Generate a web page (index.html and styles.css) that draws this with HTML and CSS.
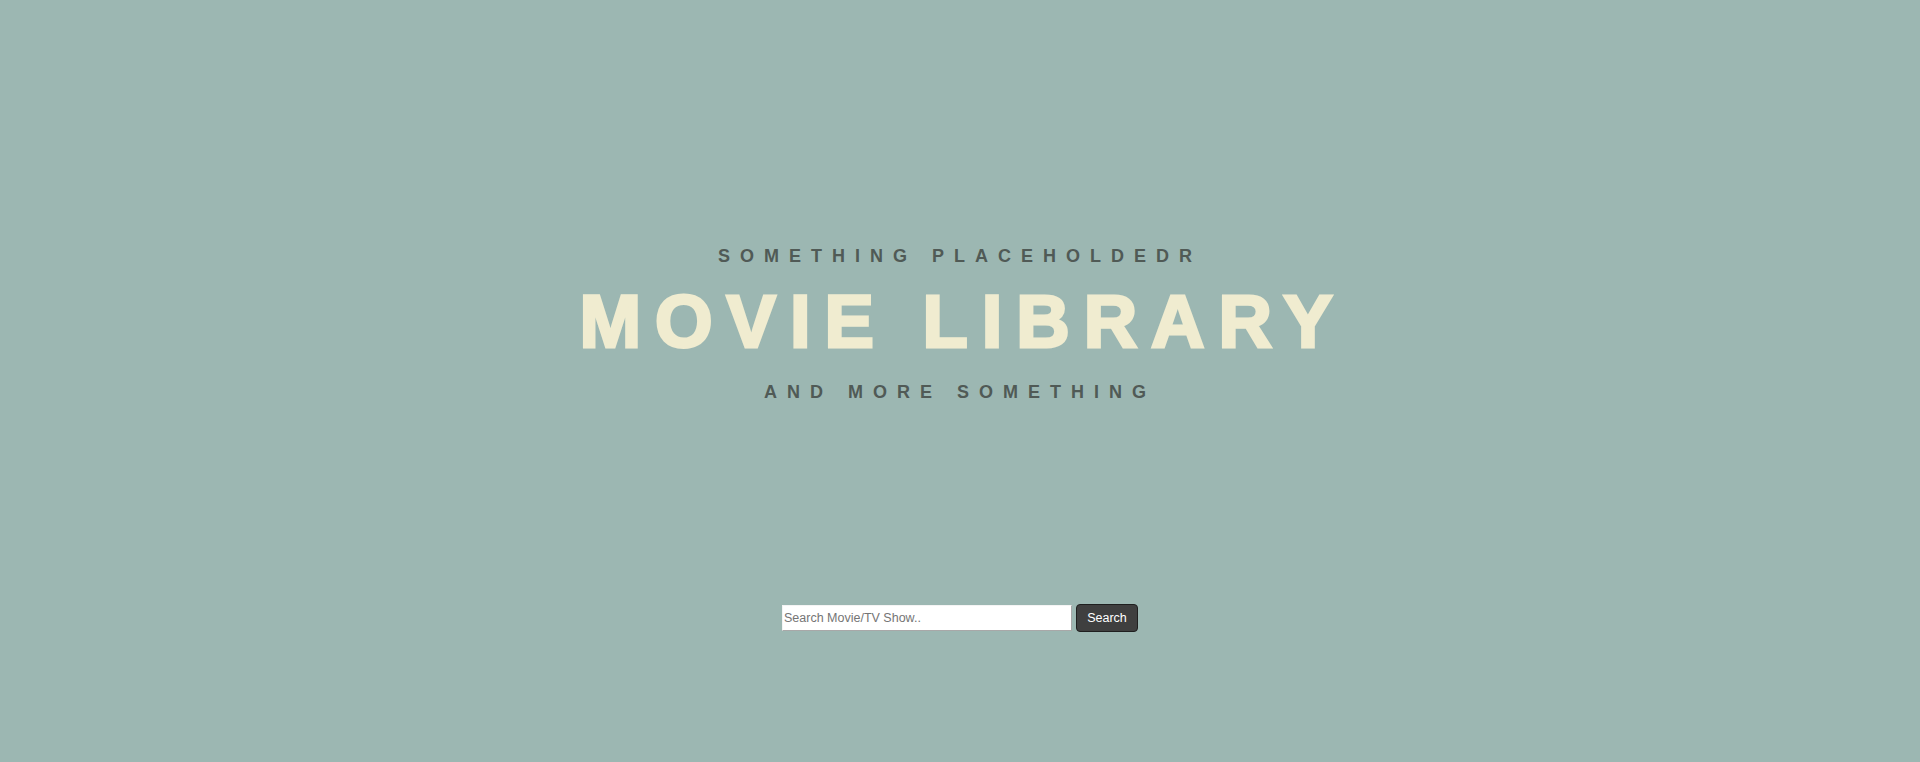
FILE: index.html
```html
<!DOCTYPE html>
<html lang="en">
<head>
<meta charset="utf-8">
<title>Movie Library</title>
<link rel="stylesheet" href="styles.css">
</head>
<body>
<header class="hero">
  <p class="kicker">SOMETHING PLACEHOLDEDR</p>
  <h1 class="title">MOVIE LIBRARY</h1>
  <p class="kicker kicker-bottom">AND MORE SOMETHING</p>
</header>
<form class="search" onsubmit="return false;">
  <input class="search-input" type="text" placeholder="Search Movie/TV Show..">
  <button class="search-btn" type="submit">Search</button>
</form>
</body>
</html>
```
FILE: styles.css
```css
html, body {
  margin: 0;
  padding: 0;
}
body {
  background: #9cb7b2;
  font-family: "Liberation Sans", Arial, sans-serif;
  min-height: 762px;
}
.hero {
  display: flex;
  flex-direction: column;
  align-items: center;
  padding-top: 246px;
}
.kicker {
  margin: 0;
  font-size: 18px;
  line-height: 20px;
  font-weight: 700;
  letter-spacing: 10px;
  color: #505a56;
  text-align: center;
}
.title {
  margin: 16px 0 0;
  padding-left: 6px;
  font-size: 74px;
  line-height: 80px;
  font-weight: 700;
  letter-spacing: 14px;
  color: #f0ecd0;
  -webkit-text-stroke: 3px #f0ecd0;
  text-align: center;
}
.kicker-bottom {
  margin-top: 20px;
}
.search {
  display: flex;
  justify-content: center;
  align-items: center;
  gap: 4px;
  margin: 202px 0 0;
}
.search-input {
  box-sizing: border-box;
  width: 290px;
  height: 26px;
  margin: 0;
  padding: 0 1px;
  border: 1px solid;
  border-color: #f4f4f4 #a8a8a8 #a8a8a8 #f4f4f4;
  background: #fff;
  font-family: "Liberation Sans", Arial, sans-serif;
  font-size: 12.5px;
  color: #333;
  outline: none;
}
.search-input::placeholder {
  color: #757575;
}
.search-btn {
  box-sizing: border-box;
  width: 62px;
  height: 28px;
  margin: 0;
  padding: 0;
  border: 1px solid #1f1f1f;
  border-radius: 4px;
  background: #3f3f3f;
  color: #fff;
  font-family: "Liberation Sans", Arial, sans-serif;
  font-size: 12.5px;
  cursor: pointer;
}
```
